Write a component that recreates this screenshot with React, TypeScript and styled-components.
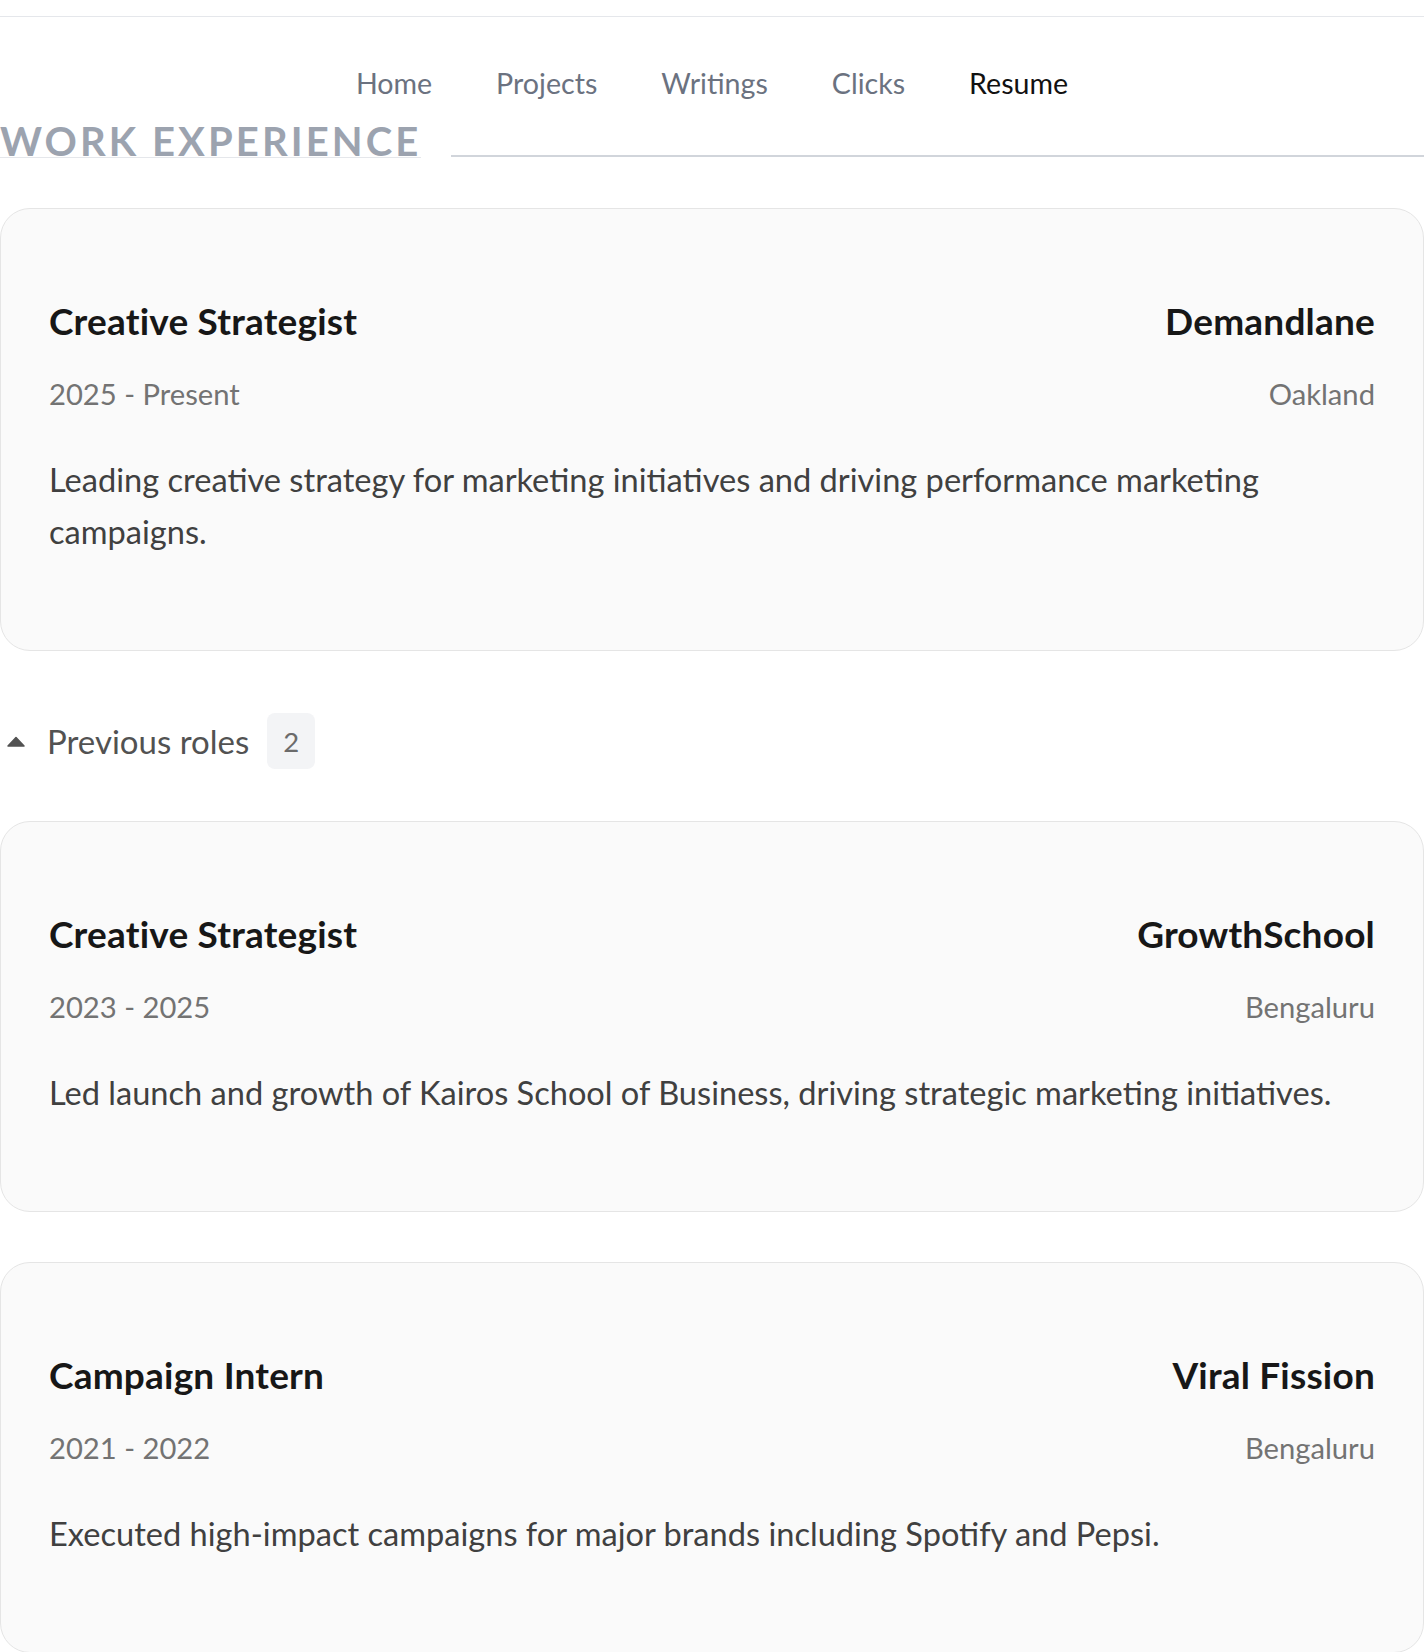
import React, { useState } from "react";
import styled, { createGlobalStyle } from "styled-components";

const GlobalStyle = createGlobalStyle`
  html, body { margin: 0; padding: 0; background: #ffffff; }
  body {
    font-family: Lato, "Noto Sans", sans-serif;
    -webkit-font-smoothing: antialiased;
  }
  * { box-sizing: border-box; }
`;

const Page = styled.div`
  width: 100%;
  padding-bottom: 2px;
`;

const TopBar = styled.div`
  height: 17px;
  border-bottom: 1px solid #e5e7eb;
`;

const Nav = styled.nav`
  display: flex;
  justify-content: center;
  gap: 64px;
  padding-top: 46px;
`;

const NavLink = styled.a<{ $active?: boolean }>`
  font-size: 28.6px;
  line-height: 40px;
  color: ${(p) => (p.$active ? "#111111" : "#6b7280")};
  text-decoration: none;
  cursor: pointer;
`;

const Section = styled.section`
  margin-top: 18px;
`;

const HeadingRow = styled.div`
  display: flex;
  align-items: flex-end;
  gap: 30px;
`;

const Heading = styled.h2`
  margin: 0;
  height: 37px;
  overflow: hidden;
  font-size: 40px;
  line-height: 40px;
  font-weight: 700;
  letter-spacing: 0.077em;
  text-transform: uppercase;
  color: #9ca3af;
  border-bottom: 1px solid #e5e7eb;
  white-space: nowrap;
`;

const Divider = styled.div`
  flex: 1;
  height: 2px;
  margin-bottom: 1px;
  background: #d1d5db;
`;

const CardList = styled.div<{ $top: number }>`
  display: flex;
  flex-direction: column;
  gap: 50px;
  margin-top: ${(p) => p.$top}px;
`;

const Card = styled.article`
  border: 1px solid #e5e5e5;
  border-radius: 30px;
  background: #fafafa;
  padding: 92px 48px 92px;
`;

const CardHeader = styled.div`
  display: flex;
  justify-content: space-between;
  align-items: flex-start;
`;

const Column = styled.div<{ $align: "start" | "end" }>`
  display: flex;
  flex-direction: column;
  align-items: ${(p) => (p.$align === "end" ? "flex-end" : "flex-start")};
`;

const Title = styled.h3`
  margin: 0;
  font-size: 37px;
  line-height: 40px;
  font-weight: 700;
  letter-spacing: 0.2px;
  color: #171717;
`;

const Meta = styled.span`
  margin-top: 33px;
  font-size: 29.2px;
  line-height: 40px;
  color: #737373;
`;

const Description = styled.p`
  margin: 40px 0 0;
  font-size: 32.6px;
  line-height: 52px;
  color: #404040;
`;

const ToggleRow = styled.button`
  display: flex;
  align-items: center;
  height: 56px;
  margin: 62px 0 52px;
  padding: 0 0 0 6px;
  border: none;
  background: transparent;
  font-family: inherit;
  cursor: pointer;
`;

const Caret = styled.svg`
  width: 20px;
  height: 11px;
  color: #525252;
`;

const ToggleLabel = styled.span`
  margin-left: 21px;
  font-size: 33px;
  line-height: 40px;
  color: #525252;
`;

const Badge = styled.span`
  display: flex;
  align-items: center;
  justify-content: center;
  height: 56px;
  margin-left: 18px;
  padding: 0 16px;
  border-radius: 8px;
  background: #f3f4f6;
  font-size: 27.5px;
  color: #6b6b6b;
`;

type Role = {
  title: string;
  company: string;
  period: string;
  location: string;
  description: string;
};

const current: Role = {
  title: "Creative Strategist",
  company: "Demandlane",
  period: "2025 - Present",
  location: "Oakland",
  description:
    "Leading creative strategy for marketing initiatives and driving performance marketing campaigns.",
};

const previous: Role[] = [
  {
    title: "Creative Strategist",
    company: "GrowthSchool",
    period: "2023 - 2025",
    location: "Bengaluru",
    description:
      "Led launch and growth of Kairos School of Business, driving strategic marketing initiatives.",
  },
  {
    title: "Campaign Intern",
    company: "Viral Fission",
    period: "2021 - 2022",
    location: "Bengaluru",
    description:
      "Executed high-impact campaigns for major brands including Spotify and Pepsi.",
  },
];

const RoleCard = ({ role }: { role: Role }) => (
  <Card>
    <CardHeader>
      <Column $align="start">
        <Title>{role.title}</Title>
        <Meta>{role.period}</Meta>
      </Column>
      <Column $align="end">
        <Title>{role.company}</Title>
        <Meta>{role.location}</Meta>
      </Column>
    </CardHeader>
    <Description>{role.description}</Description>
  </Card>
);

export default function App() {
  const [open, setOpen] = useState(true);
  return (
    <Page>
      <GlobalStyle />
      <TopBar />
      <Nav>
        <NavLink>Home</NavLink>
        <NavLink>Projects</NavLink>
        <NavLink>Writings</NavLink>
        <NavLink>Clicks</NavLink>
        <NavLink $active>Resume</NavLink>
      </Nav>
      <Section>
        <HeadingRow>
          <Heading>Work Experience</Heading>
          <Divider />
        </HeadingRow>
        <CardList $top={50}>
          <RoleCard role={current} />
        </CardList>
        <ToggleRow onClick={() => setOpen(!open)}>
          <Caret viewBox="0 0 20 11" aria-hidden>
            <path
              d="M2 10 L10 1.5 L18 10 Z"
              fill="currentColor"
              stroke="currentColor"
              strokeWidth="1.5"
              strokeLinejoin="round"
              transform={open ? undefined : "rotate(180 10 5.5)"}
            />
          </Caret>
          <ToggleLabel>Previous roles</ToggleLabel>
          <Badge>{previous.length}</Badge>
        </ToggleRow>
        {open && (
          <CardList $top={0}>
            {previous.map((r) => (
              <RoleCard key={r.company} role={r} />
            ))}
          </CardList>
        )}
      </Section>
    </Page>
  );
}
